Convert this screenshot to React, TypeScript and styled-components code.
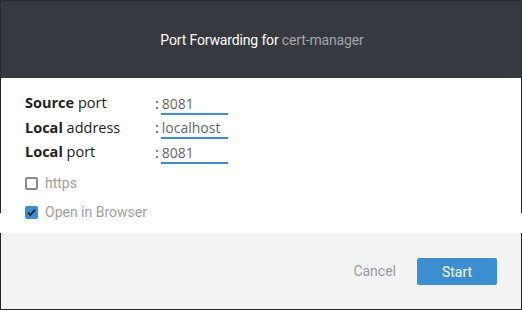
import React from "react";
import styled, { createGlobalStyle } from "styled-components";

const Global = createGlobalStyle`
  html, body { margin: 0; padding: 0; background: #ffffff; }
  body { width: 522px; height: 310px; overflow: hidden; }
`;

const Dialog = styled.div`
  width: 522px;
  display: flex;
  flex-direction: column;
  font-family: Roboto, "Liberation Sans", sans-serif;
`;

const Header = styled.div`
  height: 78px;
  box-sizing: border-box;
  background: #36393f;
  border: 1px solid #2a2c30;
  border-bottom: none;
  display: flex;
  align-items: center;
  justify-content: center;
  font-size: 14px;
  letter-spacing: -0.15px;
  color: #ffffff;
  padding-top: 1px;
  padding-left: 2px;
`;

const Muted = styled.span`
  color: #a3a5a8;
`;

const Body = styled.div`
  height: 135px;
  box-sizing: border-box;
  border-left: 1px solid #262626;
  border-right: 1px solid #262626;
  padding: 13px 24px 0;
  background: #fff;
`;

const Grid = styled.div`
  display: grid;
  grid-template-columns: 130px auto;
  row-gap: 0.5px;
  align-items: center;
  font-family: "Open Sans", "Noto Sans", sans-serif;
  font-size: 14.5px;
  color: #222;
`;

const Label = styled.div`
  height: 24px;
  line-height: 24px;
  b { font-weight: 700; }
`;

const Field = styled.div`
  display: flex;
  align-items: center;
  height: 24px;
  color: #555;
`;

const Colon = styled.span`
  margin-right: 2px;
  color: #444;
`;

const Input = styled.input`
  width: 67px;
  box-sizing: border-box;
  border: none;
  border-bottom: 2px solid #3c8dcb;
  padding: 0 0 0 1px;
  height: 21px;
  margin-top: 2px;
  font-family: "Open Sans", "Noto Sans", sans-serif;
  font-size: 14px;
  color: #666;
  background: transparent;
  outline: none;
`;

const Checks = styled.div`
  display: flex;
  flex-direction: column;
  gap: 9px;
  margin-top: 9px;
`;

const CheckRow = styled.label`
  display: flex;
  align-items: center;
  gap: 7px;
  height: 20px;
  font-size: 14px;
  color: #a0a0a0;
`;

const Box = styled.span<{ $checked?: boolean }>`
  width: 13px;
  height: 13px;
  box-sizing: border-box;
  border-radius: 2px;
  border: 2px solid ${(p) => (p.$checked ? "#3a8fd1" : "#8a8a8a")};
  background: ${(p) => (p.$checked ? "#3a8fd1" : "#fff")};
  display: flex;
  align-items: center;
  justify-content: center;
`;

const Footer = styled.div`
  margin-top: 20px;
  height: 77px;
  box-sizing: border-box;
  background: #f3f3f3;
  border: 1px solid #262626;
  border-top: none;
  display: flex;
  align-items: center;
  justify-content: flex-end;
  padding: 0 24px 0 0;
  gap: 21px;
`;

const CancelButton = styled.button`
  background: none;
  border: none;
  font-family: Roboto, "Liberation Sans", sans-serif;
  font-size: 14px;
  color: #979ca3;
  padding: 0;
  cursor: pointer;
`;

const StartButton = styled.button`
  width: 80px;
  height: 27px;
  background: #3b8fd0;
  color: #fff;
  border: none;
  border-radius: 2px;
  font-family: Roboto, "Liberation Sans", sans-serif;
  font-size: 14px;
  padding: 0;
  margin-top: 1px;
  cursor: pointer;
`;

const rows = [
  { bold: "Source", rest: " port", value: "8081" },
  { bold: "Local", rest: " address", value: "localhost" },
  { bold: "Local", rest: " port", value: "8081" },
];

export default function App() {
  return (
    <>
      <Global />
      <Dialog>
        <Header>
          Port Forwarding for&nbsp;<Muted>cert-manager</Muted>
        </Header>
        <Body>
          <Grid>
            {rows.map((r, i) => (
              <React.Fragment key={i}>
                <Label>
                  <b>{r.bold}</b>
                  {r.rest}
                </Label>
                <Field>
                  <Colon>:</Colon>
                  <Input defaultValue={r.value} />
                </Field>
              </React.Fragment>
            ))}
          </Grid>
          <Checks>
            <CheckRow>
              <Box />
              https
            </CheckRow>
            <CheckRow>
              <Box $checked>
                <svg width="10" height="9" viewBox="0 0 10 9">
                  <path d="M1 4.6 L3.8 7.2 L9 1.4" fill="none" stroke="#222" strokeWidth="2" />
                </svg>
              </Box>
              Open in Browser
            </CheckRow>
          </Checks>
        </Body>
        <Footer>
          <CancelButton>Cancel</CancelButton>
          <StartButton>Start</StartButton>
        </Footer>
      </Dialog>
    </>
  );
}
